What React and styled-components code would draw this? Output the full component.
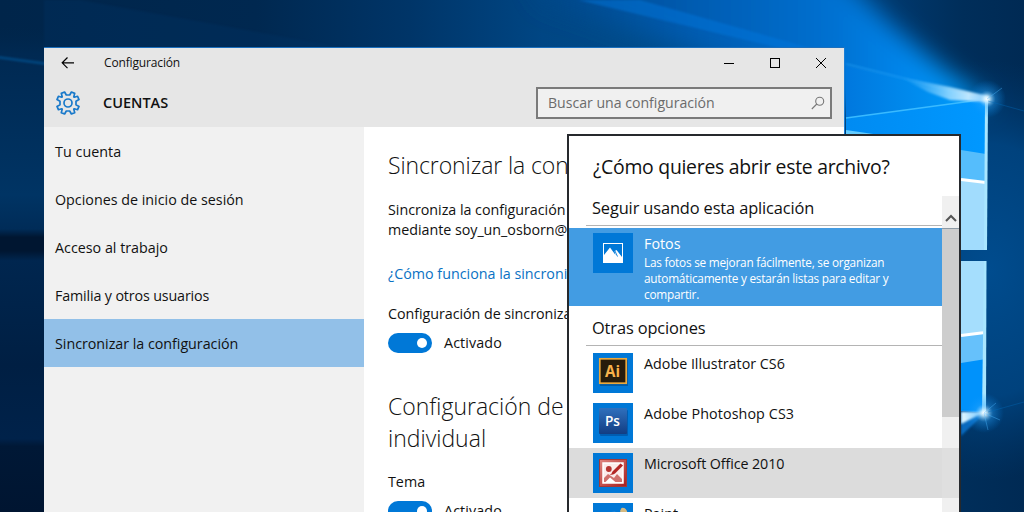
import React from 'react';
import styled, { createGlobalStyle } from 'styled-components';

const GlobalStyle = createGlobalStyle`
    * {
        box-sizing: border-box;
    }
    body {
        margin: 0;
        overflow: hidden;
        font-family: 'Open Sans', 'Noto Sans', sans-serif;
        color: #111;
    }
`;

const Desktop = styled.main`
    position: relative;
    width: 1024px;
    height: 512px;
    overflow: hidden;
    background: #002a5c;
`;

const WallpaperSvg = styled.svg`
    position: absolute;
    inset: 0;
`;

const Text = styled.span`
    display: block;
    white-space: nowrap;
    font-size: ${({ $size }) => $size || 14.3}px;
    line-height: ${({ $line }) => $line || 20}px;
    letter-spacing: ${({ $track }) => $track || 0}px;
    font-weight: ${({ $weight }) => $weight || 400};
    color: ${({ $color }) => $color || 'inherit'};
`;

/* ventana de configuración */
const SettingsWindow = styled.section`
    position: absolute;
    left: 44px;
    top: 47px;
    width: 801px;
    height: 480px;
    display: flex;
    flex-direction: column;
    border-top: 1px solid #1b6fbd;
    border-right: 1px solid #1b7fd6;
    background: #fff;
`;

const WindowHeader = styled.header`
    height: 79px;
    flex: none;
    background: #e6e6e6;
`;

const TitleBar = styled.div`
    height: 30px;
    display: flex;
    align-items: center;
    padding: 0 17px;
    gap: 29px;
`;

const WindowButtons = styled.div`
    display: flex;
    gap: 34px;
    margin-left: auto;
`;

const HeaderRow = styled.div`
    height: 48px;
    display: flex;
    align-items: center;
    margin-top: 1px;
    padding: 0 12px;
    gap: 23px;
`;

const SearchBox = styled.div`
    width: 296px;
    height: 32px;
    margin-left: auto;
    display: flex;
    align-items: center;
    justify-content: space-between;
    padding: 0 5px 0 10px;
    border: 2px solid #7a7a7a;
    background: #f0f0f0;
`;

const WindowBody = styled.div`
    display: flex;
    flex: 1;
`;

const Nav = styled.nav`
    width: 320px;
    background: #f1f1f1;
`;

const NavItem = styled.div`
    height: 48px;
    display: flex;
    align-items: center;
    padding: 2px 11px 0;
    background: ${({ $active }) => ($active ? '#92c0e8' : 'transparent')};
`;

const Content = styled.div`
    width: 203px;
    display: flex;
    flex-direction: column;
    overflow: hidden;
    padding: 22px 0 0 24px;
`;

const Block = styled.div`
    margin-top: ${({ $top }) => $top}px;
`;

const ToggleRow = styled.div`
    display: flex;
    align-items: center;
    gap: 12px;
    height: 20px;
    margin-top: 9px;
`;

const Switch = styled.div`
    width: 44px;
    height: 20px;
    display: flex;
    align-items: center;
    justify-content: flex-end;
    padding-right: 5px;
    border-radius: 10px;
    background: #0078d7;
`;

const Knob = styled.div`
    width: 10px;
    height: 10px;
    border-radius: 50%;
    background: #fff;
`;

/* cuadro "abrir con" */
const Dialog = styled.section`
    position: absolute;
    left: 567px;
    top: 134px;
    width: 394px;
    height: 400px;
    border: 2px solid #26292d;
    background: #fff;
`;

const DialogTitle = styled.div`
    height: 60px;
    padding: 16px 0 0 24px;
`;

const DialogBody = styled.div`
    display: flex;
    height: 330px;
`;

const AppList = styled.div`
    width: 373px;
    flex: none;
`;

const GroupTitle = styled.div`
    height: ${({ $height }) => $height}px;
    display: flex;
    align-items: flex-end;
    margin-left: 17px;
    padding: 0 0 7px 6px;
    border-bottom: 1px solid #b4b4b4;
`;

const AppRow = styled.div`
    display: flex;
    gap: 11px;
    width: ${({ $hover }) => ($hover ? 390 : 373)}px;
    height: ${({ $height }) => $height || 50}px;
    margin-top: ${({ $top }) => $top || 0}px;
    padding: 5px 0 0 24px;
    background: ${({ $selected, $hover }) => ($selected ? '#429ce3' : $hover ? '#dcdcdc' : 'transparent')};
    color: ${({ $selected }) => ($selected ? '#fff' : 'inherit')};
`;

const Tile = styled.div`
    width: 40px;
    height: 40px;
    flex: none;
    background: #0078d7;
`;

const ScrollBar = styled.div`
    width: 17px;
    background: rgba(225, 225, 225, 0.5);
    position: relative;
`;

const ScrollUp = styled.div`
    height: 33px;
    display: flex;
    justify-content: center;
    align-items: flex-end;
    padding-bottom: 6px;
    border-bottom: 1px solid #8d9aa5;
`;

const ScrollThumb = styled.div`
    height: 188px;
    background: #cdcdcd;
`;

const Wallpaper = () => (
    <WallpaperSvg width="1024" height="512" viewBox="0 0 1024 512">
        <defs>
            <linearGradient id="base" x1="0" x2="1" y1="0" y2="0">
                <stop offset="0" stopColor="#00254a" />
                <stop offset=".25" stopColor="#002850" />
                <stop offset=".4" stopColor="#003568" />
                <stop offset=".53" stopColor="#004684" />
                <stop offset=".7" stopColor="#00508f" />
                <stop offset=".86" stopColor="#003a70" />
                <stop offset=".94" stopColor="#002e5a" />
                <stop offset="1" stopColor="#002a54" />
            </linearGradient>
            <linearGradient id="left" x1="0" x2="0" y1="0" y2="1">
                <stop offset="0" stopColor="#00264b" stopOpacity="0" />
                <stop offset=".06" stopColor="#002952" />
                <stop offset=".35" stopColor="#003464" />
                <stop offset=".42" stopColor="#002c58" />
                <stop offset=".437" stopColor="#001631" />
                <stop offset=".465" stopColor="#001631" />
                <stop offset=".485" stopColor="#00264f" />
                <stop offset=".7" stopColor="#001f43" />
                <stop offset=".85" stopColor="#00224a" />
                <stop offset=".865" stopColor="#001836" />
                <stop offset="1" stopColor="#001531" />
            </linearGradient>
            <linearGradient id="beam" gradientUnits="userSpaceOnUse" x1="540" y1="0" x2="987" y2="0">
                <stop offset="0" stopColor="#004686" />
                <stop offset=".35" stopColor="#005cb2" />
                <stop offset=".65" stopColor="#0070d0" />
                <stop offset=".82" stopColor="#0086ec" />
                <stop offset="1" stopColor="#00a2ff" />
            </linearGradient>
            <radialGradient id="side" gradientUnits="userSpaceOnUse" cx="0" cy="0" r="1" gradientTransform="translate(990 270) scale(150 210)">
                <stop offset="0" stopColor="#004c8e" />
                <stop offset=".6" stopColor="#004684" stopOpacity=".85" />
                <stop offset="1" stopColor="#003a70" stopOpacity="0" />
            </radialGradient>
            <radialGradient id="flare">
                <stop offset="0" stopColor="#fff" />
                <stop offset=".15" stopColor="#c8ecff" stopOpacity=".85" />
                <stop offset=".45" stopColor="#2aa6ff" stopOpacity=".35" />
                <stop offset="1" stopColor="#0090ff" stopOpacity="0" />
            </radialGradient>
            <linearGradient id="pane" x1="0" x2="1" y1="0" y2="0">
                <stop offset="0" stopColor="#008bf2" />
                <stop offset="1" stopColor="#0098ff" />
            </linearGradient>
            <linearGradient id="between" x1="0" x2="1" y1="0" y2="0">
                <stop offset="0" stopColor="#0078de" />
                <stop offset="1" stopColor="#00a0ff" />
            </linearGradient>
            <linearGradient id="ray" x1="0" x2="1" y1="0" y2="0">
                <stop offset="0" stopColor="#4fbcff" stopOpacity="0" />
                <stop offset=".55" stopColor="#9adbff" stopOpacity=".85" />
                <stop offset="1" stopColor="#fff" />
            </linearGradient>
            <filter id="soft" x="-20%" y="-50%" width="140%" height="200%">
                <feGaussianBlur stdDeviation="12" />
            </filter>
            <filter id="thin" x="-20%" y="-20%" width="140%" height="140%">
                <feGaussianBlur stdDeviation="1.3" />
            </filter>
        </defs>
        <rect width="1024" height="512" fill="url(#base)" />
        <rect y="24" width="44" height="488" fill="url(#left)" />
        <path d="M44 0 H80 L345 48 H44 Z" fill="#003468" opacity=".3" filter="url(#thin)" />
        <rect x="840" width="184" height="512" fill="url(#side)" />
        <path d="M992 104 L940 66 L890 24 L845 -20 L790 -70 L520 -70 L540 0 L720 60 L846 110 Z" fill="url(#beam)" filter="url(#soft)" />
        <path d="M578 0 L640 0 L846 58 L846 64 L780 48 Z" fill="#0078e0" opacity=".45" filter="url(#thin)" />
        <path d="M846 66 L987 99 L846 118 Z" fill="url(#between)" />
        <path d="M846 64 L987 99" stroke="#2fadff" strokeWidth="1.500" opacity=".5" filter="url(#thin)" />
        <path d="M846 118 L987 99 V250 H846 Z" fill="url(#pane)" />
        <path d="M846 118 L987 99" stroke="#39baff" strokeWidth="1.6" />
        <path d="M846 130 L880 135 H846 Z" fill="#62cbff" />
        <path d="M900 77 L950 87 L988 96 L989 102 L950 100 L928 92 Z" fill="url(#ray)" filter="url(#thin)" />
        {/* cristal superior */}
        <path d="M961 150 L986 154 V250 H961 Z" fill="#55bdfc" />
        <path d="M961 179 L986 182 V250 H961 Z" fill="#a1dcfd" />
        <path d="M961 179.500 L986 182.500" stroke="#fff" strokeWidth="3" />
        <path d="M985 100 L988 100 L987 250 H984 Z" fill="#a9e6ff" />
        {/* cristal inferior */}
        <path d="M961 261 H986 V413 L961 411 Z" fill="#0092fb" />
        <path d="M961 261 H986 V359 L961 363 Z" fill="#66c1fb" />
        <path d="M961 261 H986 V331 L961 336 Z" fill="#a5defd" />
        <path d="M961 335.500 L985 332.500" stroke="#fff" strokeWidth="3" />
        <path d="M984 261 H986.500 L986 414 H982 Z" fill="#a9e6ff" />
        <path d="M961 411 L985 413 L961 436 Z" fill="#0a7fe0" opacity=".7" filter="url(#thin)" />
        <path d="M961 412 L985 412 L961 424 Z" fill="#d6f2ff" filter="url(#thin)" />
        <circle cx="987" cy="99" r="19" fill="url(#flare)" />
        <circle cx="984" cy="413" r="20" fill="url(#flare)" />
        <path d="M987 99 L1002 88 M984 413 L1000 420 M984 413 L996 403 M984 413 L988 430" stroke="#4fb8ff" strokeWidth="1" opacity=".4" />
        <path d="M988 101 L1024 111 M988 412 L1024 402" stroke="#0069b8" opacity=".4" />
        <path d="M-4 57 L48 64" stroke="#005595" strokeWidth="2.500" opacity=".7" filter="url(#thin)" />
    </WallpaperSvg>
);

const BackIcon = () => (
    <svg width="14" height="13" viewBox="0 0 14 13" fill="none" stroke="#000" strokeWidth="1.200">
        <path d="M6.500 .5 L1.200 5.800 L6.500 11.100 M1.200 5.800 H13" />
    </svg>
);

const GearIcon = () => (
    <svg width="24" height="24" viewBox="0 0 24 24" fill="none" stroke="#1979ca" strokeWidth="1.700" strokeLinejoin="round">
        <path d="M10.300 4 L8.600 1 L5.300 2.400 L6.200 5.700 Q6 6 5.700 6.200 L2.400 5.300 L1 8.600 L4 10.300 V13.700 L1 15.400 L2.400 18.700 L5.700 17.800 Q6 18 6.200 18.300 L5.300 21.600 L8.600 23 L10.300 20 H13.700 L15.400 23 L18.700 21.600 L17.800 18.300 Q18 18 18.300 17.800 L21.600 18.700 L23 15.400 L20 13.700 V10.300 L23 8.600 L21.600 5.300 L18.300 6.200 Q18 6 17.800 5.700 L18.700 2.400 L15.400 1 L13.700 4 Z" />
        <circle cx="12" cy="12" r="4" />
    </svg>
);

const SearchIcon = () => (
    <svg width="14" height="14" viewBox="0 0 14 14" fill="none" stroke="#777" strokeWidth="1.100">
        <circle cx="8.700" cy="5.200" r="4" />
        <path d="M5.800 8 L.8 13" />
    </svg>
);

const PhotosIcon = () => (
    <svg width="40" height="40" viewBox="0 0 40 40">
        <rect x="10.500" y="10.500" width="19" height="19" fill="none" stroke="#fff" />
        <path d="M11 22 L17 14.500 L22.500 22 L21.500 18 L23.500 17 L29 24 V30 H11 Z" fill="#fff" />
        <path d="M21.500 17 L24.500 23.500" stroke="#0078d7" strokeWidth=".9" />
    </svg>
);

const IllustratorIcon = () => (
    <svg width="40" height="40" viewBox="0 0 40 40">
        <rect x="7" y="7" width="28" height="26" fill="#00498b" opacity=".6" />
        <rect x="6.800" y="5.800" width="26.400" height="24.400" fill="#271c0c" stroke="#eba83c" strokeWidth="1.700" />
        <text x="19.500" y="24.200" textAnchor="middle" fontSize="16" fontWeight="700" fill="#f9b24b" textLength="15" lengthAdjust="spacingAndGlyphs">Ai</text>
    </svg>
);

const PhotoshopIcon = () => (
    <svg width="40" height="40" viewBox="0 0 40 40">
        <defs>
            <linearGradient id="ps" x1="0" y1="0" x2="0" y2="1">
                <stop offset="0" stopColor="#2f70bd" />
                <stop offset="1" stopColor="#123d83" />
            </linearGradient>
        </defs>
        <rect x="7" y="7" width="28" height="26" rx="1" fill="#004b97" opacity=".6" />
        <rect x="6" y="5" width="28" height="26" rx="1" fill="url(#ps)" />
        <text x="19.500" y="22.800" textAnchor="middle" fontSize="15" fontWeight="600" fill="#fff" textLength="15" lengthAdjust="spacingAndGlyphs">Ps</text>
    </svg>
);

const OfficeIcon = () => (
    <svg width="40" height="40" viewBox="0 0 40 40">
        <defs>
            <linearGradient id="office" x1="0" y1="0" x2="1" y2="1">
                <stop offset="0" stopColor="#e08680" />
                <stop offset="1" stopColor="#a81d1d" />
            </linearGradient>
        </defs>
        <rect x="6.500" y="6.500" width="27" height="27" fill="url(#office)" stroke="#a33937" />
        <rect x="10" y="10" width="20" height="20" fill="#fbeceb" stroke="#fff" strokeWidth="1.500" />
        <path d="M11 29 V25 L15 21 L21 25 L24 21 L29 26 V29 Z" fill="#cf706c" />
        <path d="M12 29.500 L17 24.500 L23 29.500 Z" fill="#fff" />
        <circle cx="15.800" cy="16" r="2.900" fill="#b63632" />
        <path d="M19.500 18.500 L27.500 10.500 L30 12.500 L22 20.500 Q19 22.500 16.500 21.500 Q19 21 19.500 18.500 Z" fill="#b32624" />
    </svg>
);

const PaintIcon = () => (
    <svg width="40" height="40" viewBox="0 0 40 40">
        <path d="M27 8 L28.500 5 Q32 4 34 8 L34.500 14 L30 14 Z" fill="#d5b980" />
        <path d="M7 12 L22 8 L28 20 H7 Z" fill="#1f86dc" />
    </svg>
);

const navItems = [
    { label: 'Tu cuenta', track: 0.05 },
    { label: 'Opciones de inicio de sesión' },
    { label: 'Acceso al trabajo' },
    { label: 'Familia y otros usuarios', track: -0.15 },
    { label: 'Sincronizar la configuración', track: -0.03 }
];

const apps = [
    { name: 'Adobe Illustrator CS6', Icon: IllustratorIcon, top: 2 },
    { name: 'Adobe Photoshop CS3', Icon: PhotoshopIcon, track: 0.1 },
    { name: 'Microsoft Office 2010', Icon: OfficeIcon, track: -0.1 },
    { name: 'Paint', Icon: PaintIcon }
];

const Toggle = () => (
    <ToggleRow>
        <Switch><Knob /></Switch>
        <Text $track={0.1}>Activado</Text>
    </ToggleRow>
);

const App = () => (
    <>
        <GlobalStyle />
        <Desktop>
            <Wallpaper />
            <SettingsWindow>
                <WindowHeader>
                    <TitleBar>
                        <BackIcon />
                        <Text $size={12} $track={-0.15}>Configuración</Text>
                        <WindowButtons>
                            <svg width="12" height="12"><path d="M1 6.500 H11" stroke="#000" /></svg>
                            <svg width="12" height="12"><rect x="1.500" y="1.500" width="9" height="9" fill="none" stroke="#000" /></svg>
                            <svg width="12" height="12"><path d="M1 1 L11 11 M11 1 L1 11" stroke="#000" /></svg>
                        </WindowButtons>
                    </TitleBar>
                    <HeaderRow>
                        <GearIcon />
                        <Text $size={14.5} $line={22} $weight={600}>CUENTAS</Text>
                        <SearchBox>
                            <Text $size={14.1} $color="#6b6b6b">Buscar una configuración</Text>
                            <SearchIcon />
                        </SearchBox>
                    </HeaderRow>
                </WindowHeader>
                <WindowBody>
                    <Nav>
                        {navItems.map((item, index) => (
                            <NavItem key={item.label} $active={index === 4}>
                                <Text $track={item.track}>{item.label}</Text>
                            </NavItem>
                        ))}
                    </Nav>
                    <Content>
                        <Text $size={23} $line={32} $weight={300} $track={-0.1}>Sincronizar la configuración</Text>
                        <Block $top={19}>
                            <Text $track={-0.03}>Sincroniza la configuración</Text>
                            <Text $track={-0.03}>mediante soy_un_osborn@</Text>
                        </Block>
                        <Block $top={24}>
                            <Text $color="#0a72c4">¿Cómo funciona la sincronización</Text>
                        </Block>
                        <Block $top={20}>
                            <Text $track={-0.05}>Configuración de sincronización</Text>
                            <Toggle />
                        </Block>
                        <Block $top={37}>
                            <Text $size={23} $line={32} $weight={300}>Configuración de</Text>
                            <Text $size={23} $line={32} $weight={300}>individual</Text>
                        </Block>
                        <Block $top={18}>
                            <Text>Tema</Text>
                            <Toggle />
                        </Block>
                    </Content>
                </WindowBody>
            </SettingsWindow>
            <Dialog>
                <DialogTitle>
                    <Text $size={19.4} $line={30} $track={-0.27}>¿Cómo quieres abrir este archivo?</Text>
                </DialogTitle>
                <DialogBody>
                    <AppList>
                        <GroupTitle $height={30}>
                            <Text $size={16.4} $track={-0.13}>Seguir usando esta aplicación</Text>
                        </GroupTitle>
                        <AppRow $selected $height={78} $top={2}>
                            <Tile><PhotosIcon /></Tile>
                            <div>
                                <Text $line={21}>Fotos</Text>
                                <Text $size={11.8} $line={16} $track={-0.23}>Las fotos se mejoran fácilmente, se organizan</Text>
                                <Text $size={11.8} $line={16} $track={-0.23}>automáticamente y estarán listas para editar y</Text>
                                <Text $size={11.8} $line={16} $track={-0.23}>compartir.</Text>
                            </div>
                        </AppRow>
                        <GroupTitle $height={40}>
                            <Text $size={16.4} $track={-0.13}>Otras opciones</Text>
                        </GroupTitle>
                        {apps.map(({ name, Icon, top, track }, index) => (
                            <AppRow key={name} $hover={index === 2} $top={top}>
                                <Tile><Icon /></Tile>
                                <Text $line={21} $track={track}>{name}</Text>
                            </AppRow>
                        ))}
                    </AppList>
                    <ScrollBar>
                        <ScrollUp>
                            <svg width="12" height="8" viewBox="0 0 12 8"><path d="M1 7 L6 2 L11 7" fill="none" stroke="#555" strokeWidth="2" /></svg>
                        </ScrollUp>
                        <ScrollThumb />
                    </ScrollBar>
                </DialogBody>
            </Dialog>
        </Desktop>
    </>
);

export default App;
